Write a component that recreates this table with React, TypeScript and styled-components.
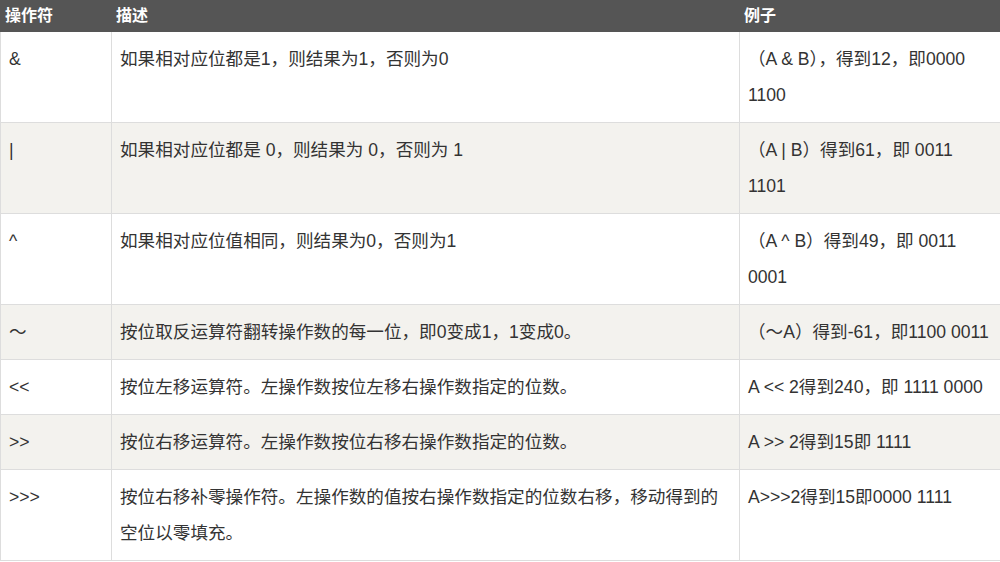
import React from "react";
import styled, { createGlobalStyle } from "styled-components";

const Global = createGlobalStyle`
  html, body { margin: 0; padding: 0; background: #fff; }
  body { font-family: "Liberation Sans", "Noto Sans CJK SC", sans-serif; color: #333; }
`;

const Table = styled.table`
  border-collapse: collapse;
  width: 1001px;
  table-layout: fixed;
  font-size: 17.6px;
`;

const HeadCell = styled.th<{ $w?: number }>`
  background: #555;
  color: #fff;
  font-weight: bold;
  font-size: 16px;
  text-align: left;
  height: 31px;
  padding: 0 4px;
  box-sizing: border-box;
  border: 1px solid #555;
  line-height: 20px;
  ${(p) => (p.$w ? `width: ${p.$w}px;` : "")}
`;

const Row = styled.tr<{ $alt: boolean }>`
  background: ${(p) => (p.$alt ? "#f3f2ee" : "#fff")};
`;

const Cell = styled.td`
  border: 1px solid #dddddd;
  padding: 9px 7px 9px 8px;
  line-height: 36px;
  vertical-align: top;
  word-break: normal;
  overflow-wrap: break-word;
`;

const rows: [string, string, string][] = [
  ["&", "如果相对应位都是1，则结果为1，否则为0", "（A & B），得到12，即0000 1100"],
  ["|", "如果相对应位都是 0，则结果为 0，否则为 1", "（A | B）得到61，即 0011 1101"],
  ["^", "如果相对应位值相同，则结果为0，否则为1", "（A ^ B）得到49，即 0011 0001"],
  ["～", "按位取反运算符翻转操作数的每一位，即0变成1，1变成0。", "（～A）得到-61，即1100 0011"],
  ["<<", "按位左移运算符。左操作数按位左移右操作数指定的位数。", "A << 2得到240，即 1111 0000"],
  [">>", "按位右移运算符。左操作数按位右移右操作数指定的位数。", "A >> 2得到15即 1111"],
  [">>>", "按位右移补零操作符。左操作数的值按右操作数指定的位数右移，移动得到的空位以零填充。", "A>>>2得到15即0000 1111"],
];

export default function App() {
  return (
    <>
      <Global />
      <Table>
        <thead>
          <tr>
            <HeadCell $w={111}>操作符</HeadCell>
            <HeadCell $w={628}>描述</HeadCell>
            <HeadCell>例子</HeadCell>
          </tr>
        </thead>
        <tbody>
          {rows.map((r, i) => (
            <Row key={i} $alt={i % 2 === 1}>
              <Cell>{r[0]}</Cell>
              <Cell>{r[1]}</Cell>
              <Cell>{r[2]}</Cell>
            </Row>
          ))}
        </tbody>
      </Table>
    </>
  );
}
